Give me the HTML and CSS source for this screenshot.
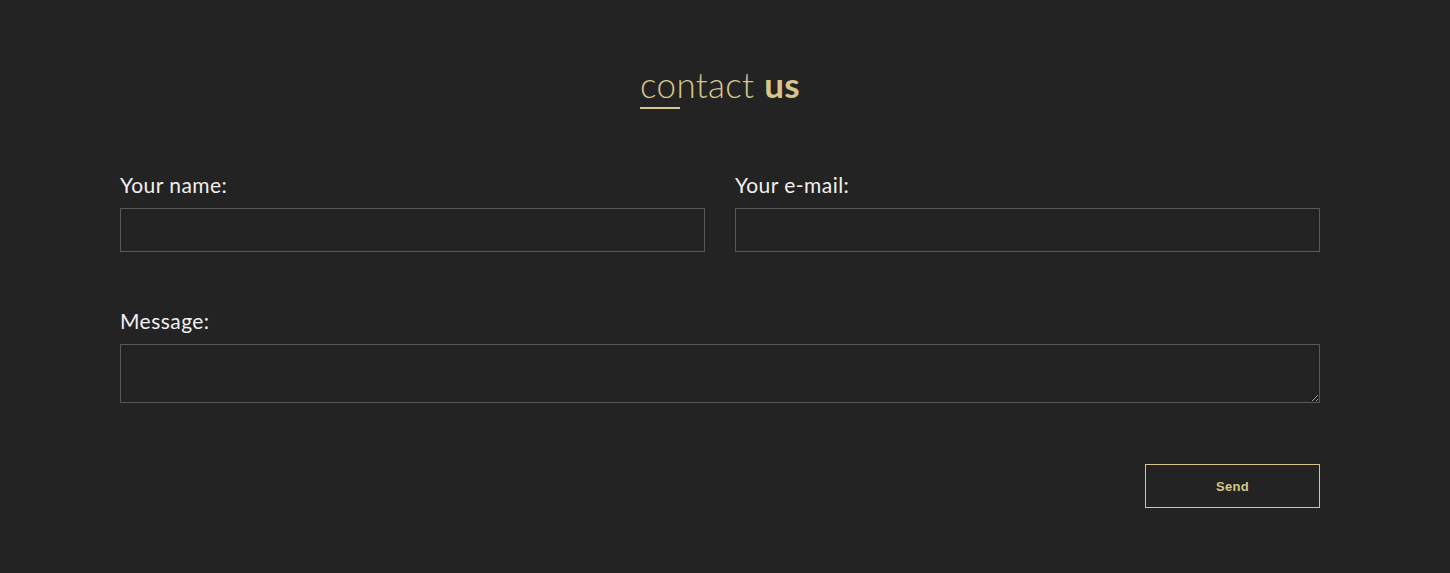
FILE: index.html
```html
<!DOCTYPE html>
<html lang="en">
<head>
<meta charset="utf-8">
<title>Contact us</title>
<link rel="stylesheet" href="styles.css">
</head>
<body>
<section class="contact">
  <div class="title-wrap">
    <h2 class="title"><span class="light">contact</span> <span class="bold">us</span></h2>
  </div>
  <form class="form">
    <div class="row two">
      <div class="field">
        <label class="label" for="name">Your name:</label>
        <input class="input" id="name" type="text">
      </div>
      <div class="field">
        <label class="label" for="email">Your e-mail:</label>
        <input class="input" id="email" type="email">
      </div>
    </div>
    <div class="row">
      <div class="field">
        <label class="label" for="msg">Message:</label>
        <textarea class="input textarea" id="msg"></textarea>
      </div>
    </div>
    <div class="actions">
      <button class="send" type="button">Send</button>
    </div>
  </form>
</section>
</body>
</html>
```
FILE: styles.css
```css
html, body {
  margin: 0;
  padding: 0;
  background: #232323;
  height: 100%;
}
.contact {
  padding: 62px 130px 0 120px;
  font-family: "Lato", "Open Sans", sans-serif;
}
.title-wrap {
  display: flex;
  justify-content: center;
}
.title {
  margin: 0;
  font-size: 35px;
  line-height: 44px;
  color: #d7c68a;
  font-weight: 300;
  letter-spacing: 0.3px;
  padding-bottom: 3px;
}
.title::after {
  content: "";
  display: block;
  width: 40px;
  height: 2px;
  margin-top: 1px;
  background: #d7c68a;
}
.title .light {
  font-weight: 300;
}
.title .bold {
  font-weight: 700;
}
.form {
  margin-top: 60px;
  width: 1200px;
}
.row.two {
  display: grid;
  grid-template-columns: 585px 585px;
  column-gap: 30px;
}
.row + .row {
  margin-top: 56px;
}
.field {
  display: flex;
  flex-direction: column;
}
.label {
  color: #f0f0f0;
  font-size: 21px;
  font-weight: 400;
  line-height: 26px;
  letter-spacing: 0.45px;
  margin-bottom: 10px;
}
.input {
  box-sizing: border-box;
  height: 44px;
  border: 1px solid #575757;
  background: #232323;
  color: #fff;
  font-family: inherit;
  margin: 0;
}
.textarea {
  height: 59px;
  resize: vertical;
  width: 100%;
}
.actions {
  display: flex;
  justify-content: flex-end;
  margin-top: 61px;
}
.send {
  width: 175px;
  height: 44px;
  box-sizing: border-box;
  border: 1px solid #d7c68a;
  background: transparent;
  color: #d7c68a;
  font-family: "Liberation Sans", Arial, sans-serif;
  font-weight: 700;
  font-size: 13px;
  letter-spacing: 0.3px;
}
```
